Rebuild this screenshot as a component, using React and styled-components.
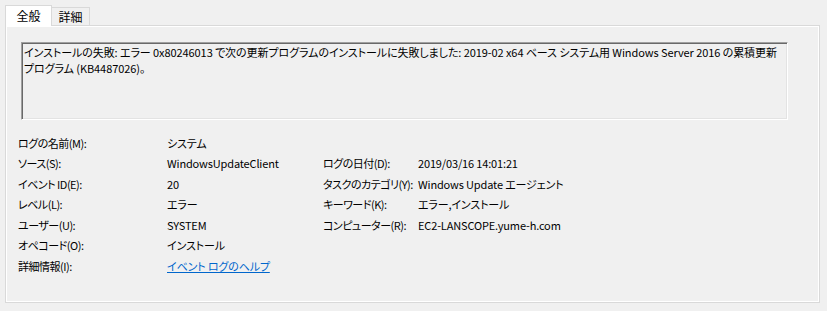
import React from "react";
import styled, { createGlobalStyle } from "styled-components";

const GlobalStyle = createGlobalStyle`
  body {
    margin: 0;
    background: #f0f0f0;
    font-family: "Noto Sans CJK JP", "Noto Sans", sans-serif;
    font-size: 11px;
    color: #000;
    font-feature-settings: "palt" 1;
  }
`;

const Window = styled.div`
  width: 827px;
  height: 311px;
  box-sizing: border-box;
  padding: 5px 7px 8px 5px;
  display: flex;
  flex-direction: column;
`;

const TabStrip = styled.div`
  display: flex;
  align-items: flex-end;
  height: 21px;
  margin-bottom: -1px;
  position: relative;
  z-index: 1;
`;

const Tab = styled.div`
  box-sizing: border-box;
  width: ${(p) => (p.$active ? 47 : 38)}px;
  height: ${(p) => (p.$active ? 21 : 19)}px;
  border: 1px solid #d9d9d9;
  border-left: ${(p) => (p.$active ? "1px solid #d9d9d9" : "none")};
  border-bottom: ${(p) => (p.$active ? "none" : "1px solid #d9d9d9")};
  background: ${(p) => (p.$active ? "#fff" : "#f0f0f0")};
  display: flex;
  align-items: center;
  justify-content: center;
  padding-top: ${(p) => (p.$active ? 0 : 1)}px;
  font-size: 12px;
  line-height: 1;
`;

const Panel = styled.div`
  flex: 1;
  border: 1px solid #d9d9d9;
  box-shadow: inset 1px 1px 0 #fff, inset -1px -1px 0 #fff;
  padding: 16px 31px 0 12px;
  display: flex;
  flex-direction: column;
`;

const Description = styled.div`
  box-sizing: border-box;
  margin-left: 3px;
  height: 78px;
  border-top: 1px solid #a0a0a0;
  border-left: 1px solid #a0a0a0;
  border-right: 1px solid #fff;
  border-bottom: 1px solid #fff;
  box-shadow: inset 1px 1px 0 #696969, inset -1px -1px 0 #e3e3e3;
  padding: 1px 2px 0;
  line-height: 16px;
  letter-spacing: -0.08px;
  white-space: nowrap;
  overflow: hidden;
`;

const Props = styled.div`
  display: grid;
  grid-template-columns: 149px 156px 95px 1fr;
  grid-auto-rows: 20.5px;
  align-items: center;
  margin-top: 13px;
`;

const Label = styled.div`
  white-space: nowrap;
  line-height: 1;
  letter-spacing: -0.5px;
`;

const Value = styled.div`
  white-space: nowrap;
  line-height: 1;
  letter-spacing: -0.15px;
`;

const HelpLink = styled.a`
  color: #0066cc;
  text-decoration: underline;
  cursor: pointer;
`;

const rows = [
  ["ログの名前(M):", "システム", "", ""],
  ["ソース(S):", "WindowsUpdateClient", "ログの日付(D):", "2019/03/16 14:01:21"],
  ["イベント ID(E):", "20", "タスクのカテゴリ(Y):", "Windows Update エージェント"],
  ["レベル(L):", "エラー", "キーワード(K):", "エラー,インストール"],
  ["ユーザー(U):", "SYSTEM", "コンピューター(R):", "EC2-LANSCOPE.yume-h.com"],
  ["オペコード(O):", "インストール", "", ""],
  ["詳細情報(I):", null, "", ""],
];

export default function App() {
  return (
    <Window>
      <GlobalStyle />
      <TabStrip>
        <Tab $active>全般</Tab>
        <Tab>詳細</Tab>
      </TabStrip>
      <Panel>
        <Description>
          インストールの失敗: エラー 0x80246013 で次の更新プログラムのインストールに失敗しました: 2019-02 x64 ベース システム用 Windows Server 2016 の累積更新
          <br />
          プログラム (KB4487026)。
        </Description>
        <Props>
          {rows.map((r, i) => (
            <React.Fragment key={i}>
              <Label>{r[0]}</Label>
              <Value>{r[1] === null ? <HelpLink>イベント ログのヘルプ</HelpLink> : r[1]}</Value>
              <Label>{r[2]}</Label>
              <Value>{r[3]}</Value>
            </React.Fragment>
          ))}
        </Props>
      </Panel>
    </Window>
  );
}
